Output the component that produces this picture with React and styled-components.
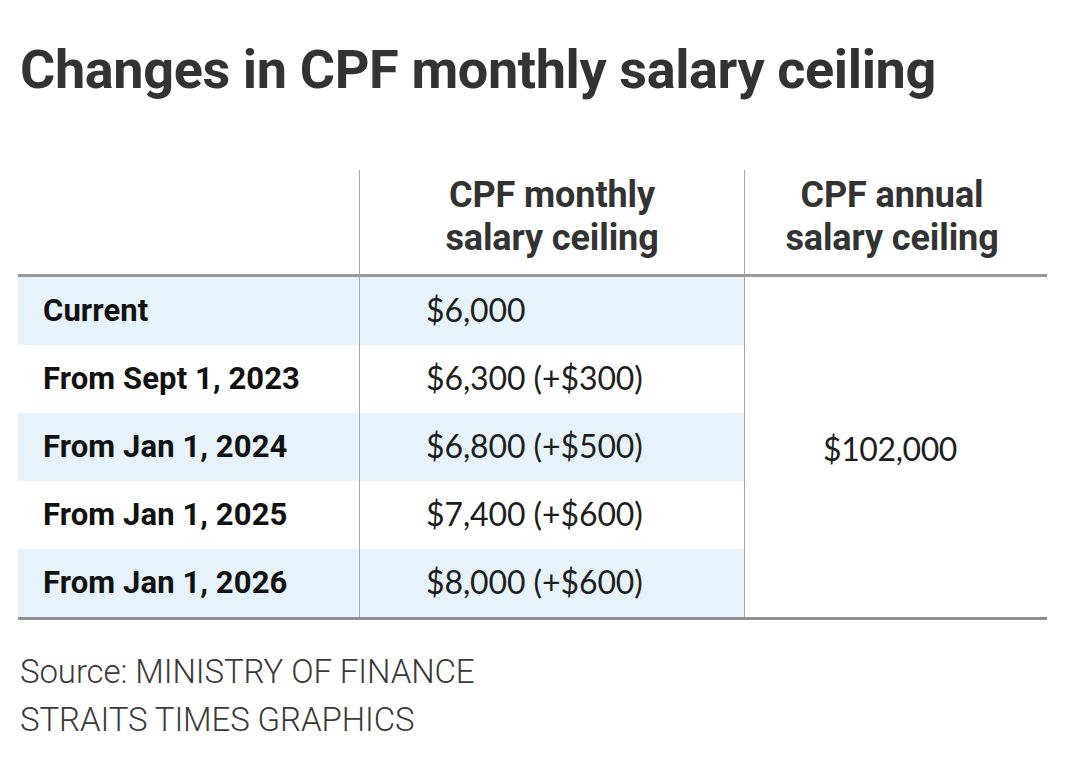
import styled, { createGlobalStyle } from 'styled-components';

const GlobalStyle = createGlobalStyle`
  html, body {
    margin: 0;
    padding: 0;
    background: #ffffff;
  }
  body {
    font-family: Roboto, "Liberation Sans", sans-serif;
    color: #2b2b2b;
  }
`;

const rows = [
  { label: 'Current', value: '$6,000', shaded: true },
  { label: 'From Sept 1, 2023', value: '$6,300 (+$300)', shaded: false },
  { label: 'From Jan 1, 2024', value: '$6,800 (+$500)', shaded: true },
  { label: 'From Jan 1, 2025', value: '$7,400 (+$600)', shaded: false },
  { label: 'From Jan 1, 2026', value: '$8,000 (+$600)', shaded: true },
];

export default function App() {
  return (
    <>
      <GlobalStyle />
      <StPage>
        <StTitle>Changes in CPF monthly salary ceiling</StTitle>
        <StTable>
          <StHeadCell />
          <StHeadCell $divider>
            CPF monthly
            <br />
            salary ceiling
          </StHeadCell>
          <StHeadCell $shift>
            CPF annual
            <br />
            salary ceiling
          </StHeadCell>
          {rows.map((row, i) => (
            <StRowGroup key={row.label}>
              <StLabel $shaded={row.shaded}>{row.label}</StLabel>
              <StValue $shaded={row.shaded}>{row.value}</StValue>
              {i === 0 && <StAnnual>$102,000</StAnnual>}
            </StRowGroup>
          ))}
        </StTable>
        <StSource>
          <p>Source: MINISTRY OF FINANCE</p>
          <p>STRAITS TIMES GRAPHICS</p>
        </StSource>
      </StPage>
    </>
  );
}

const StPage = styled.div`
  width: 1067px;
  height: 767px;
  padding: 38px 20px 0 18px;
  box-sizing: border-box;
`;

const StTitle = styled.h1`
  margin: 0 0 0 2px;
  font-family: Roboto, "Liberation Sans", sans-serif;
  font-weight: 700;
  font-size: 54px;
  letter-spacing: -0.38px;
  line-height: 64px;
  color: #333333;
`;

const StTable = styled.div`
  margin-top: 68px;
  width: 1029px;
  display: grid;
  grid-template-columns: 341px 386px 302px;
  grid-template-rows: 107px repeat(5, 68px);
  border-bottom: 3px solid #8f8f8f;
`;

const StRowGroup = styled.div`
  display: contents;
`;

const StHeadCell = styled.div`
  display: flex;
  align-items: center;
  justify-content: center;
  text-align: center;
  padding-bottom: 10px;
  padding-right: ${({ $shift }) => ($shift ? '8px' : '0')};
  font-weight: 700;
  font-size: 36px;
  line-height: 43px;
  letter-spacing: -0.1px;
  color: #333333;
  border-bottom: 3px solid #999999;
  border-left: ${({ $divider }) => ($divider ? '1px solid #a8a8a8' : 'none')};
  border-right: ${({ $divider }) => ($divider ? '1px solid #a8a8a8' : 'none')};
`;

const StLabel = styled.div`
  grid-column: 1;
  display: flex;
  align-items: center;
  padding-left: 25px;
  padding-bottom: 2px;
  font-weight: 700;
  font-size: 31px;
  letter-spacing: 0.1px;
  color: #111111;
  background: ${({ $shaded }) => ($shaded ? '#e6f3fb' : '#ffffff')};
`;

const StValue = styled.div`
  grid-column: 2;
  display: flex;
  align-items: center;
  padding-left: 66px;
  padding-bottom: 4px;
  font-family: Lato, "Open Sans", sans-serif;
  font-weight: 400;
  font-size: 32px;
  letter-spacing: -0.1px;
  color: #1e1e1e;
  border-left: 1px solid #a8a8a8;
  border-right: 1px solid #a8a8a8;
  background: ${({ $shaded }) => ($shaded ? '#e6f3fb' : '#ffffff')};
`;

const StAnnual = styled.div`
  grid-column: 3;
  grid-row: 2 / span 5;
  display: flex;
  align-items: center;
  justify-content: center;
  padding-right: 12px;
  padding-top: 2px;
  font-family: Lato, "Open Sans", sans-serif;
  font-size: 32px;
  letter-spacing: -0.4px;
  color: #1e1e1e;
`;

const StSource = styled.div`
  margin-top: 28px;
  padding-left: 2px;
  p {
    margin: 0;
    font-family: Roboto, "Liberation Sans", sans-serif;
    font-weight: 300;
    font-size: 33px;
    line-height: 48px;
    letter-spacing: -0.1px;
    color: #3a3a3a;
  }
`;
